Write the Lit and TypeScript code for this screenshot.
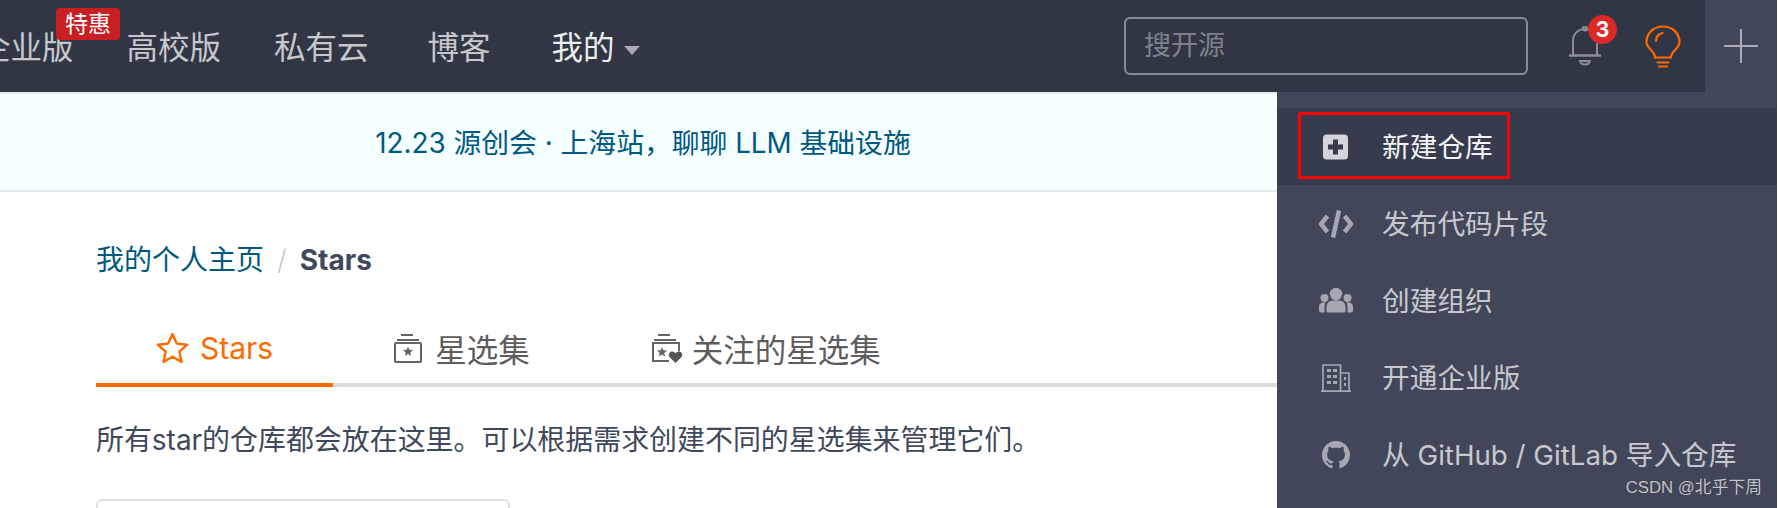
import { LitElement, html, css, svg } from "lit";
import { customElement } from "lit/decorators.js";

const GH = "M8 0C3.58 0 0 3.58 0 8c0 3.54 2.29 6.53 5.47 7.59.4.07.55-.17.55-.38 0-.19-.01-.82-.01-1.49-2.01.37-2.53-.49-2.69-.94-.09-.23-.48-.94-.82-1.13-.28-.15-.68-.52-.01-.53.63-.01 1.08.58 1.23.82.72 1.21 1.87.87 2.33.66.07-.52.28-.87.51-1.07-1.78-.2-3.64-.89-3.64-3.95 0-.87.31-1.59.82-2.15-.08-.2-.36-1.02.08-2.12 0 0 .67-.21 2.2.82.64-.18 1.32-.27 2-.27.68 0 1.36.09 2 .27 1.53-1.04 2.2-.82 2.2-.82.44 1.1.16 1.92.08 2.12.51.56.82 1.27.82 2.15 0 3.07-1.87 3.75-3.65 3.95.29.25.54.73.54 1.48 0 1.07-.01 1.93-.01 2.2 0 .21.15.46.55.38A8.013 8.013 0 0016 8c0-4.42-3.58-8-8-8z";

const icons = {
  plusBox: svg`<rect x="5" y="5.500" width="25" height="25" rx="3.500" fill="#d3d5da"/><path d="M17.500 10.500v15M10 18h15" stroke="#363b4d" stroke-width="5" fill="none"/>`,
  code: svg`<path d="M9.500 10 3 18l6.500 8M26.500 10l6.500 8-6.500 8" fill="none" stroke="#a5a9b3" stroke-width="4.400"/><path d="M21 4.500 15 31.500" fill="none" stroke="#a5a9b3" stroke-width="4.400"/>`,
  team: svg`<g fill="#a5a9b3"><circle cx="18" cy="11" r="6.200"/><circle cx="6.500" cy="15" r="4"/><circle cx="29.500" cy="15" r="4"/><path d="M8.500 28v-4c0-4.500 3.500-6.500 6.500-6.500h6c3 0 6.500 2 6.500 6.500v4q0 1.500-1.500 1.500H10q-1.500 0-1.500-1.500z"/><path d="M1 27.500v-3.500c0-3.500 2.500-4.500 5-4.500h1.800c-.9 1.200-1.300 2.800-1.300 4.500v5.500H3q-2 0-2-2zM35 27.500v-3.500c0-3.500-2.500-4.500-5-4.500h-1.800c.9 1.200 1.300 2.800 1.300 4.500v5.500H33q2 0 2-2z"/></g>`,
  building: svg`<g fill="none" stroke="#a5a9b3" stroke-width="1.700"><path d="M5 31V5h17.500v26M22.500 13H31v18M3 31.200h30"/></g><g fill="#a5a9b3"><rect x="9" y="9" width="4" height="3"/><rect x="15" y="9" width="4" height="3"/><rect x="9" y="15" width="4" height="3"/><rect x="15" y="15" width="4" height="3"/><rect x="9" y="21" width="4" height="3"/><rect x="15" y="21" width="4" height="3"/><rect x="26" y="17" width="2" height="3"/><rect x="26" y="23" width="2" height="3"/></g>`,
};

@customElement("app-root")
export class AppRoot extends LitElement {
  static styles = css`
    :host {
      display: block;
      position: relative;
      width: 1777px;
      height: 508px;
      overflow: hidden;
      background: #fff;
      font-family: Inter, "Noto Sans CJK SC", sans-serif;
      color: #40485b;
    }
    .nav {
      display: flex;
      align-items: center;
      height: 92px;
      background: #303644;
      font-size: 31.500px;
      color: #c6c8cd;
    }
    .links {
      display: flex;
      align-items: center;
      gap: 53px;
      margin-left: -21px;
      padding-top: 4px;
      flex: 1;
    }
    .link { position: relative; line-height: 44px; white-space: nowrap; }
    .blog { margin-left: 6px; }
    .mine { display: flex; align-items: center; color: #eceded; gap: 9px; margin-left: 8px; }
    .caret {
      width: 0; height: 0;
      border-left: 8px solid transparent;
      border-right: 8px solid transparent;
      border-top: 9px solid #a9acb3;
      margin-top: 5px;
    }
    .badge {
      position: absolute;
      left: 77px;
      top: -18px;
      width: 64px;
      height: 32px;
      border-radius: 4px;
      background: #c81f25;
      color: #fff;
      font-size: 23px;
      line-height: 32px;
      text-align: center;
    }
    .search {
      box-sizing: border-box;
      width: 404px;
      height: 58px;
      border: 2px solid #868b98;
      border-radius: 6px;
      padding-left: 18px;
      font-size: 27px;
      line-height: 54px;
      color: #7e828d;
      margin-right: 40px;
    }
    .bell { position: relative; width: 34px; height: 40px; margin-right: 43px; }
    .bell svg { display: block; }
    .count {
      position: absolute;
      left: 20px;
      top: -11px;
      width: 29px;
      height: 29px;
      border-radius: 50%;
      background: #db2828;
      color: #fff;
      font-size: 21px;
      font-weight: 700;
      line-height: 29px;
      text-align: center;
    }
    .bulb { display: block; margin-right: 24px; }
    .add {
      width: 72px;
      height: 92px;
      background: #414759;
      display: flex;
      align-items: center;
      justify-content: center;
    }
    .banner {
      box-sizing: border-box;
      height: 100px;
      background: #f5ffff;
      border-top: 2px solid #e6edf0;
      border-bottom: 2px solid #e3e8ec;
      width: 1286px;
      display: flex;
      align-items: center;
      justify-content: center;
      padding-bottom: 2px;
      font-size: 27.800px;
      color: #005980;
    }
    .content { padding: 48px 0 0 96px; }
    .crumb { display: flex; align-items: center; gap: 13px; font-size: 28px; line-height: 40px; }
    .crumb a { color: #005980; }
    .crumb i { font-style: normal; color: #c9cbcf; font-weight: 300; }
    .crumb b { font-weight: 700; color: #40485b; }
    .tabs {
      display: flex;
      margin-top: 36px;
      border-bottom: 4px solid #dcdcdc;
      height: 67px;
    }
    .tab {
      display: flex;
      align-items: center;
      gap: 10px;
      padding: 0 60px 3px;
      font-size: 31.500px;
      color: #5d5d5d;
      margin-bottom: -4px;
      border-bottom: 4px solid transparent;
      white-space: nowrap;
    }
    .tab.on { color: #ff6a00; border-bottom-color: #ff6a00; font-size: 30px; gap: 11px; padding: 0 60px 3px 60px; }
    .tab svg { display: block; flex: none; }
    .desc { margin-top: 33px; font-size: 27.950px; line-height: 40px; white-space: nowrap; }
    .box {
      box-sizing: border-box;
      margin-top: 39px;
      width: 414px;
      height: 60px;
      border: 2px solid #dee0e6;
      border-radius: 6px;
    }
    .menu {
      position: absolute;
      left: 1277px;
      right: 0;
      top: 92px;
      bottom: 0;
      background: #414759;
      padding-top: 16px;
      font-size: 27.700px;
      color: #c6c9cf;
    }
    .item {
      position: relative;
      display: flex;
      align-items: center;
      height: 77px;
      padding-left: 41px;
      gap: 28px;
      white-space: nowrap;
    }
    .item span { padding-bottom: 3px; }
    .item svg { display: block; flex: none; }
    .item.on { background: #363b4d; color: #f2f3f4; }
    .mark {
      position: absolute;
      left: 21px;
      top: 4px;
      width: 212px;
      height: 67px;
      box-sizing: border-box;
      border: 3.500px solid #f00;
    }
    .wm {
      position: absolute;
      right: 15px;
      bottom: 9px;
      font-size: 16.800px;
      line-height: 22px;
      color: #c3c5ca;
      text-shadow: 0 0 1px #2b2f3c;
      font-family: "Liberation Sans", "Noto Sans CJK SC", sans-serif;
    }
  `;

  private item(icon: unknown, label: string, on = false) {
    return html`<div class="item ${on ? "on" : ""}">
      ${on ? html`<div class="mark"></div>` : ""}
      <svg width="36" height="36" viewBox="0 0 36 36">${icon}</svg>
      <span>${label}</span>
    </div>`;
  }

  private boxIcon(heart: boolean) {
    return html`<svg width="32" height="32" viewBox="0 0 32 32">
      <path d="M8 3h12M4 8h22" stroke="#666" stroke-width="2" fill="none"/>
      ${heart
        ? svg`<path d="M19 29H3V11h26v8" stroke="#666" stroke-width="2" fill="none"/>
              <path d="M12 15l1.400 3.300 3.600.3-2.700 2.300.8 3.500-3.100-1.900-3.100 1.900.8-3.500-2.700-2.300 3.600-.3z" fill="#666"/>
              <path d="M25.500 31l-6-6c-1.500-2-.5-5 2-5.500 1.600-.3 3 .4 4 1.800 1-1.400 2.400-2.100 4-1.800 2.500.5 3.500 3.500 2 5.500z" fill="#555"/>`
        : svg`<rect x="2" y="11" width="26" height="19" stroke="#666" stroke-width="2" fill="none" rx="1"/>
              <path d="M15 14.500l1.400 3.300 3.600.3-2.700 2.300.8 3.500-3.100-1.900-3.100 1.900.8-3.500-2.700-2.300 3.600-.3z" fill="#666"/>`}
    </svg>`;
  }

  render() {
    return html`
      <div class="nav">
        <div class="links">
          <div class="link">企业版<span class="badge">特惠</span></div>
          <div class="link">高校版</div>
          <div class="link">私有云</div>
          <div class="link blog">博客</div>
          <div class="link mine">我的<span class="caret"></span></div>
        </div>
        <div class="search">搜开源</div>
        <div class="bell">
          <svg width="34" height="40" viewBox="0 0 34 40">
            <g fill="none" stroke="#8a8e99" stroke-width="2">
              <path d="M5 29V15C5 8 10 3 17 3s12 5 12 12v14"/>
              <path d="M1 29.500h32" stroke-width="2.500"/>
              <circle cx="17" cy="2.500" r="2"/>
              <path d="M12 35h10c-.5 2.500-2.500 3.500-5 3.500s-4.500-1-5-3.500z" stroke-width="1.800"/>
            </g>
          </svg>
          <span class="count">3</span>
        </div>
        <svg class="bulb" width="36" height="43" viewBox="0 0 36 43" fill="none" stroke="#ff6a00" stroke-width="2.200" stroke-linecap="round">
          <path d="M10 32.500c0-3-1.500-5-4-7.500C3 22 1.500 19.500 1.500 17 1.500 8 9 1.500 18 1.500S34.500 8 34.500 17c0 2.500-1.500 5-4.500 8-2.500 2.500-4 4.500-4 7.500"/>
          <path d="M10 32.500h16M12.500 37.500h11M14 41.500h8"/>
          <path d="M11 16c0-4 3-7 6.500-8"/>
        </svg>
        <div class="add">
          <svg width="34" height="34" viewBox="0 0 34 34"><path d="M17 0v34M0 17h34" stroke="#a9adb6" stroke-width="2"/></svg>
        </div>
      </div>
      <div class="banner">12.23 源创会 · 上海站，聊聊 LLM 基础设施</div>
      <div class="content">
        <div class="crumb"><a>我的个人主页</a><i>/</i><b>Stars</b></div>
        <div class="tabs">
          <div class="tab on">
            <svg width="33" height="33" viewBox="0 0 33 33"><path d="M16.500 2l4.300 9.600 10.400 1.100-7.800 7 2.200 10.300-9.100-5.300-9.100 5.300 2.200-10.300-7.800-7 10.400-1.100z" fill="none" stroke="#ff6a00" stroke-width="2.400" stroke-linejoin="round"/></svg>
            Stars
          </div>
          <div class="tab">${this.boxIcon(false)}星选集</div>
          <div class="tab">${this.boxIcon(true)}关注的星选集</div>
        </div>
        <div class="desc">所有star的仓库都会放在这里。可以根据需求创建不同的星选集来管理它们。</div>
        <div class="box"></div>
      </div>
      <div class="menu">
        ${this.item(icons.plusBox, "新建仓库", true)}
        ${this.item(icons.code, "发布代码片段")}
        ${this.item(icons.team, "创建组织")}
        ${this.item(icons.building, "开通企业版")}
        ${this.item(svg`<svg x="4" y="4" width="28" height="28" viewBox="0 0 16 16"><path fill="#a5a9b3" d="${GH}"/></svg>`, "从 GitHub / GitLab 导入仓库")}
        <div class="wm">CSDN @北乎下周</div>
      </div>
    `;
  }
}
